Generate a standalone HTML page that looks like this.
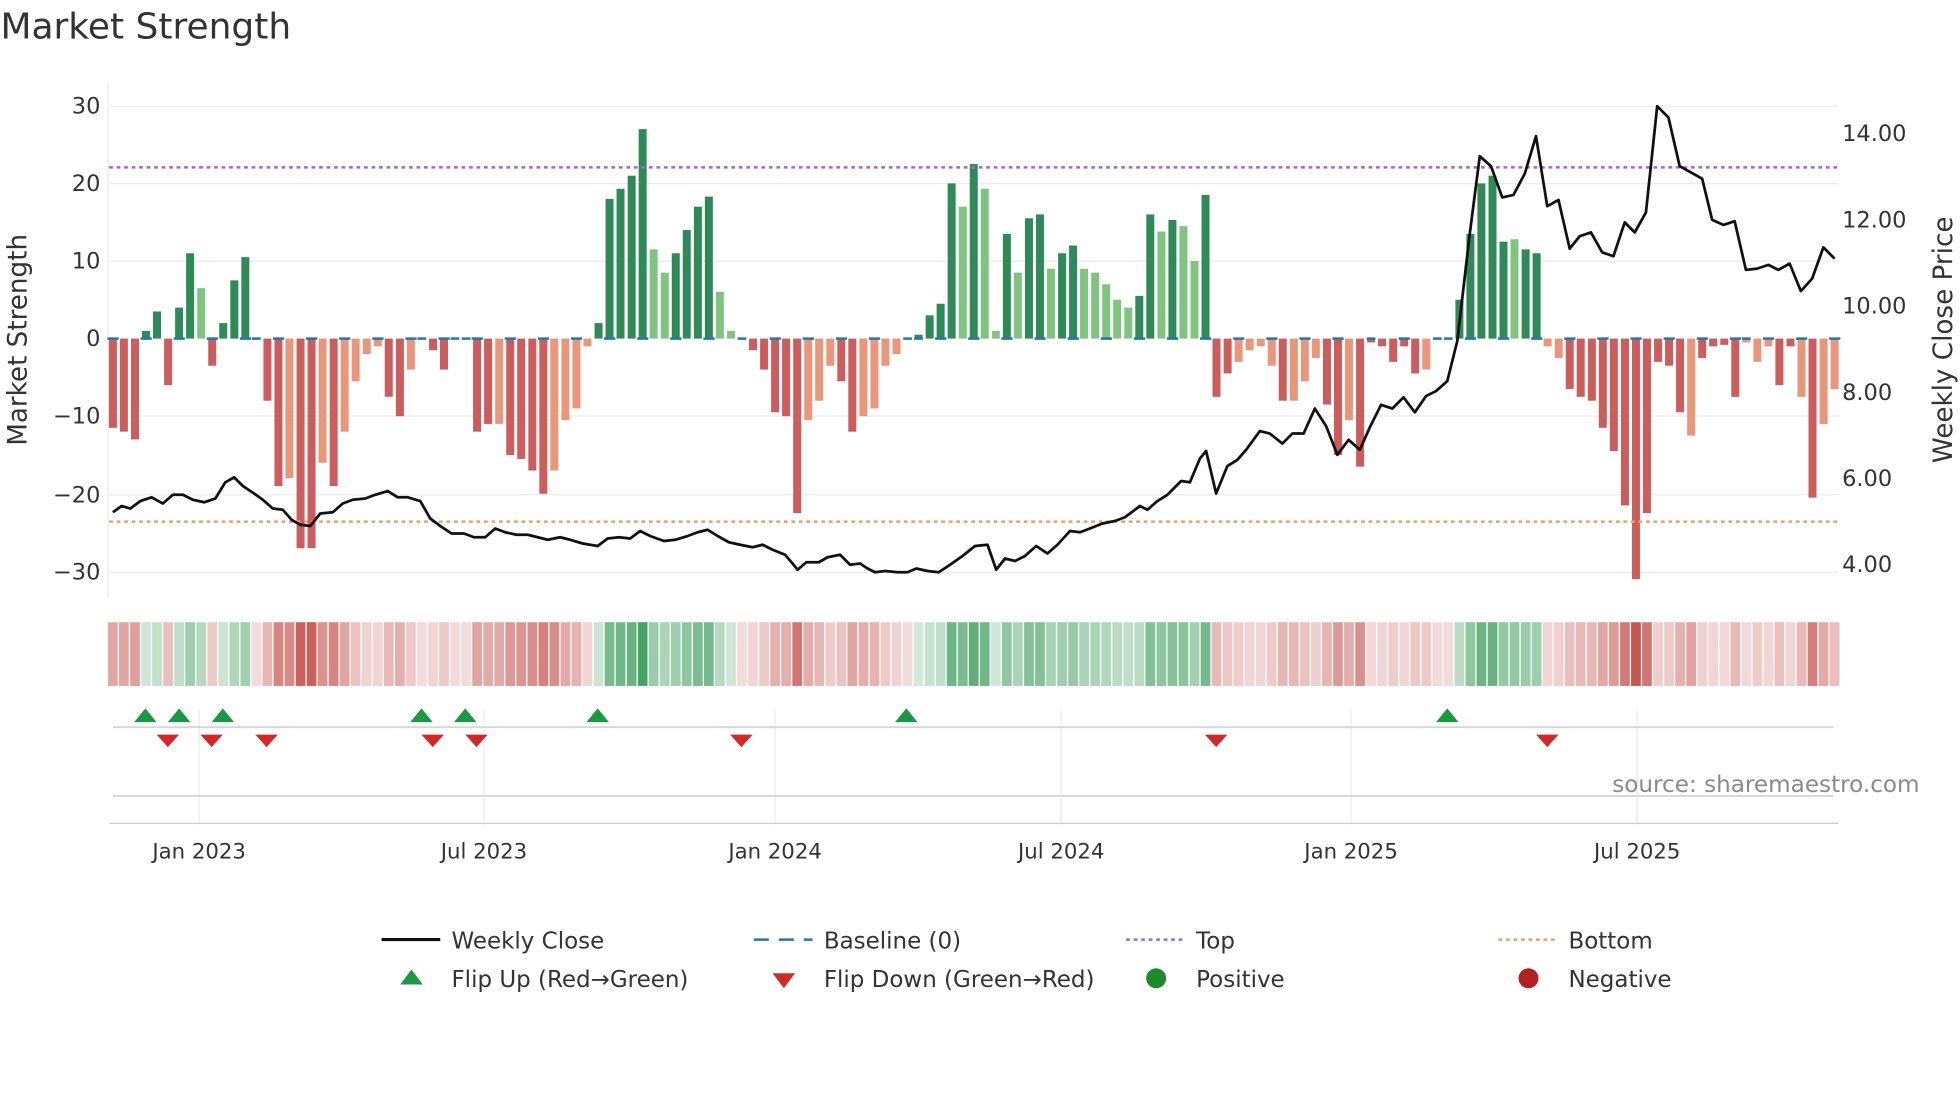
<!DOCTYPE html>
<html><head><meta charset="utf-8"><style>
html,body{margin:0;padding:0;background:#fff;width:1960px;height:1102px;overflow:hidden}
svg{display:block}
text{font-family:"DejaVu Sans","Liberation Sans",sans-serif;fill:#333}
</style></head><body>
<svg id="s" width="1960" height="1102" viewBox="0 0 1568 882" xmlns="http://www.w3.org/2000/svg">
<text x="0" y="31" font-size="28.8">Market Strength</text>
<g stroke="#ececec" stroke-width="1">
<line x1="87" x2="1471" y1="85" y2="85"/><line x1="87" x2="1471" y1="147" y2="147"/><line x1="87" x2="1471" y1="209" y2="209"/>
<line x1="87" x2="1471" y1="333" y2="333"/><line x1="87" x2="1471" y1="396" y2="396"/><line x1="87" x2="1471" y1="458" y2="458"/>
<line x1="86" x2="86" y1="65" y2="478"/>
<line x1="159" x2="159" y1="568" y2="660"/><line x1="387" x2="387" y1="568" y2="660"/><line x1="620" x2="620" y1="568" y2="660"/>
<line x1="849" x2="849" y1="568" y2="660"/><line x1="1081" x2="1081" y1="568" y2="660"/><line x1="1310" x2="1310" y1="568" y2="660"/>
</g>
<g font-size="18" text-anchor="end">
<text x="80" y="91">30</text><text x="80" y="153">20</text><text x="80" y="215">10</text><text x="80" y="277">0</text>
<text x="80" y="339">−10</text><text x="80" y="402">−20</text><text x="80" y="464">−30</text>
</g>
<g font-size="18">
<text x="1474" y="113">14.00</text><text x="1474" y="182">12.00</text><text x="1474" y="251">10.00</text>
<text x="1474" y="320">8.00</text><text x="1474" y="389">6.00</text><text x="1474" y="458">4.00</text>
</g>
<text font-size="21" transform="translate(21,272) rotate(-90)" text-anchor="middle">Market Strength</text>
<text font-size="21" transform="translate(1562,272) rotate(-90)" text-anchor="middle">Weekly Close Price</text>
<g id="bars"></g>
<line x1="87" x2="1471" y1="134" y2="134" stroke="#9b6ad6" stroke-width="2" stroke-dasharray="3,3"/>
<line x1="87" x2="1471" y1="417.5" y2="417.5" stroke="#f0a060" stroke-width="2" stroke-dasharray="3,3"/>
<polyline id="pl" fill="none" stroke="#111" stroke-width="2.2" stroke-linejoin="round"/>
<g id="strip"></g>
<line x1="90" x2="1467" y1="582" y2="582" stroke="#d6d6d6" stroke-width="1.5"/>
<g id="flips"></g>
<line x1="90" x2="1467" y1="637" y2="637" stroke="#d6d6d6" stroke-width="1.5"/>
<line x1="87" x2="1471" y1="659" y2="659" stroke="#ccc" stroke-width="1"/>
<text x="1536" y="634" font-size="18.5" text-anchor="end" style="fill:#8a8a8a">source: sharemaestro.com</text>
<g font-size="17" text-anchor="middle">
<text x="159" y="687">Jan 2023</text><text x="387" y="687">Jul 2023</text><text x="620" y="687">Jan 2024</text>
<text x="849" y="687">Jul 2024</text><text x="1081" y="687">Jan 2025</text><text x="1310" y="687">Jul 2025</text>
</g>
<g font-size="18.4">
<line x1="305" x2="352" y1="752" y2="752" stroke="#111" stroke-width="2.5"/><text x="361" y="759">Weekly Close</text>
<line x1="603" x2="650" y1="752" y2="752" stroke="#1f77b4" stroke-width="2" stroke-dasharray="12,8"/><text x="659" y="759">Baseline (0)</text>
<line x1="901" x2="946" y1="752" y2="752" stroke="#9b6ad6" stroke-width="2" stroke-dasharray="3,3"/><text x="957" y="759">Top</text>
<line x1="1199" x2="1244" y1="752" y2="752" stroke="#f0a060" stroke-width="2" stroke-dasharray="3,3"/><text x="1255" y="759">Bottom</text>
<polygon points="320,788 338,788 329,776" fill="#1a9a40"/><text x="361" y="790">Flip Up (Red→Green)</text>
<polygon points="618,779 636,779 627,791" fill="#d62728"/><text x="659" y="790">Flip Down (Green→Red)</text>
<circle cx="925" cy="783" r="8" fill="#1f8a2a"/><text x="957" y="790">Positive</text>
<circle cx="1223" cy="783" r="8" fill="#b22222"/><text x="1255" y="790">Negative</text>
</g>
</svg>
<script>
var v=[-11.5,-12,-13,1,3.5,-6,4,11,6.5,-3.5,2,7.5,10.5,0,-8,-19,-18,-27,-27,-16,-19,-12,-5.5,-2,-1,-7.5,-10,-4,0,-1.5,-4,0,0,-12,-11,-11,-15,-15.5,-17,-20,-17,-10.5,-9,-1,2,18,19.3,21,27,11.5,8.5,11,14,17,18.3,6,1,0,-1.5,-4,-9.5,-10,-22.5,-10.5,-8,-3.5,-5.5,-12,-10,-9,-3.5,-2,0,0.5,3,4.5,20,17,22.5,19.3,1,13.5,8.5,15.5,16,9,11,12,9,8.5,7,5,4,5.5,16,13.8,15.3,14.5,10,18.5,-7.5,-4.5,-3,-1.5,-1,-3.5,-8,-8,-5.5,-2.5,-8.5,-15,-10.5,-16.5,-0.5,-1,-3,-1,-4.5,-4,0,0,5,13.5,20,21,12.5,12.8,11.5,11,-1,-2.5,-6.5,-7.5,-8,-11.5,-14.5,-21.5,-31,-22.5,-3,-3.5,-9.5,-12.5,-2.5,-1,-0.8,-7.5,-0.5,-3,-1,-6,-1,-7.5,-20.5,-11,-6.5];
var light={};
[8,16,19,21,22,23,24,27,35,40,41,42,43,49,50,55,56,63,64,65,68,69,70,71,77,79,80,82,85,88,89,90,91,92,95,97,98,102,103,104,105,107,108,109,112,119,121,127,130,131,143,148,149,150,153,155,156,157].forEach(function(i){light[i]=1});
var b="",st="";
var dx=(1468-90)/(v.length-1);
for(var i=0;i<v.length;i++){
 var x=90+i*dx,h=Math.abs(v[i])*6.21,y=v[i]>=0?271-h:271;
 var c=v[i]>=0?(light[i]?"#80c47f":"#2e8b57"):(light[i]?"#e9967a":"#cd5c5c");
 if(h>0)b+='<rect x="'+(x-3.2).toFixed(1)+'" y="'+y.toFixed(1)+'" width="6.4" height="'+h.toFixed(1)+'" fill="'+c+'"/>';
 if(v[i]==0||Math.abs(v[i])<0.6)b+='<rect x="'+(x-3.5).toFixed(1)+'" y="270" width="7" height="2" fill="#1f77b4"/>';
 else if(i%3==0)b+='<rect x="'+(x-4.4).toFixed(1)+'" y="270" width="9" height="2" fill="#1f77b4"/>';
 var a=0.2+0.75*Math.min(Math.abs(v[i])/30,1);
 var col=v[i]>0?"rgba(46,150,80,"+a.toFixed(2)+")":"rgba(195,75,70,"+a.toFixed(2)+")";
 st+='<rect x="'+(x-4.4+0.5).toFixed(1)+'" y="498" width="'+(dx-1).toFixed(1)+'" height="51" fill="'+col+'"/>';
}
document.getElementById("bars").innerHTML=b;document.getElementById("strip").innerHTML=st;
var p=[90,410,97,405,104,407,112,401,121,398,130,403,138,396,146,396,154,400,163,402,172,399,180,386,187,382,194,389,203,395,210,400,218,407,226,408,233,416,240,420,248,421,256,411,266,410,274,403,282,400,292,399,300,396,310,393,318,398,326,398,336,401,344,415,352,421,361,427,371,427,379,430,388,430,396,423,404,426,413,428,422,428,430,430,438,432,448,430,456,432,466,435,478,437,486,431,495,430,504,431,512,425,520,429,531,433,540,432,550,429,558,426,566,424,574,429,583,434,592,436,602,438,610,436,618,440,628,444,634,451,638,456,645,450,655,450,662,446,672,444,680,452,688,451,694,455,700,458,708,457,718,458,726,458,733,455,742,457,751,458,760,452,770,445,780,437,790,436,797,456,804,447,812,449,820,445,829,437,838,443,846,436,856,425,864,426,872,423,882,419,892,417,900,414,912,405,918,408,926,401,934,396,945,385,952,386,960,367,965,361,973,395,982,373,990,368,997,360,1008,345,1016,347,1026,355,1034,347,1043,347,1052,327,1061,341,1070,364,1079,352,1088,360,1096,342,1105,324,1114,327,1123,318,1132,330,1141,317,1149,313,1158,305,1166,273,1176,187,1184,125,1193,133,1202,158,1211,156,1220,139,1229,109,1238,165,1247,160,1256,199,1264,189,1273,186,1282,202,1291,205,1300,178,1308,186,1317,170,1326,85,1335,94,1344,133,1353,138,1362,143,1370,176,1379,180,1388,177,1397,216,1406,215,1415,212,1423,216,1432,211,1441,233,1450,223,1459,198,1468,207];
var s="";for(var j=0;j<p.length;j+=2)s+=p[j]+","+p[j+1]+" ";
document.getElementById("pl").setAttribute("points",s);
var f="";
[116,143,178,337,372,478,725,1158].forEach(function(x){f+='<polygon points="'+(x-9)+',578 '+(x+9)+',578 '+x+',567" fill="#1a9a40"/>'});
[134,169,213,346,381,593,973,1238].forEach(function(x){f+='<polygon points="'+(x-9)+',588 '+(x+9)+',588 '+x+',598" fill="#d62728"/>'});
document.getElementById("flips").innerHTML=f;
</script>
</body></html>
